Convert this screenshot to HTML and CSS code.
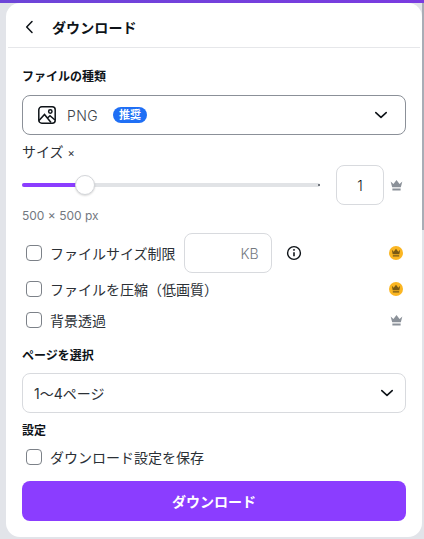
FILE: index.html
```html
<!DOCTYPE html>
<html lang="ja">
<head>
    <meta charset="UTF-8">
    <meta name="viewport" content="width=device-width, initial-scale=1.0">
    <title>ダウンロード</title>
    <link rel="stylesheet" href="styles.css">
</head>
<body>
    <div class="top-band"></div>
    <div class="scrollbar"><div class="scrollbar-thumb"></div></div>
    <div class="panel">
        <header class="panel-head">
            <svg class="back-icon" width="16" height="16" viewBox="0 0 16 16"><path d="M10 2.5 4.7 8l5.3 5.5" fill="none" stroke="#0e1318" stroke-width="1.5" stroke-linecap="round" stroke-linejoin="round"/></svg>
            <h1>ダウンロード</h1>
        </header>

        <div class="panel-body">
            <h2 class="label first">ファイルの種類</h2>
            <div class="select">
                <svg class="file-icon" width="20" height="20" viewBox="0 0 20 20" fill="none" stroke="#0e1318" stroke-width="1.5">
                    <rect x="1.8" y="1.8" width="16.4" height="16.4" rx="3"/>
                    <circle cx="13.3" cy="6.5" r="1.7"/>
                    <path d="M2 15.5 7.5 9.5 14 17.5M10.5 13l2.5-2.3 5 4.3"/>
                </svg>
                <span class="file-name">PNG</span>
                <span class="badge">推奨</span>
                <svg class="chevron" width="14" height="14" viewBox="0 0 14 14"><path d="M1.8 4.6 7 9.4l5.2-4.8" fill="none" stroke="#0e1318" stroke-width="1.6" stroke-linecap="round" stroke-linejoin="round"/></svg>
            </div>

            <div class="size-label">サイズ <span class="size-x">×</span></div>
            <div class="size-row">
                <div class="slider">
                    <div class="slider-fill"></div>
                    <div class="slider-thumb"></div>
                </div>
                <div class="number-box">1</div>
                <svg class="crown" width="13" height="13" viewBox="0 0 12 12"><path d="M.6 2.2 3.2 4.6 6 1l2.8 3.6 2.6-2.4L10 7.6H2zM2.2 8.8h7.6v1.7H2.2z" fill="#8b9199"/></svg>
            </div>
            <div class="size-note">500 × 500 px</div>

            <div class="check-row limit-row">
                <span class="checkbox"></span>
                <span class="check-text">ファイルサイズ制限</span>
                <div class="kb-box">KB</div>
                <svg class="info-icon" width="16" height="16" viewBox="0 0 16 16" fill="none" stroke="#0e1318"><circle cx="8" cy="8" r="6.4" stroke-width="1.4"/><path d="M8 7.2v4" stroke-width="1.6"/><circle cx="8" cy="4.9" r=".6" stroke-width="1"/></svg>
                <span class="crown-gold"><svg width="10" height="10" viewBox="0 0 12 12"><path d="M1 2.2 3.2 4.4 6 1l2.8 3.4L11 2.2 10 7.6H2zM2.2 8.8h7.6v1.5H2.2z" fill="#7a5a14"/></svg></span>
            </div>
            <div class="check-row compress-row">
                <span class="checkbox"></span>
                <span class="check-text">ファイルを圧縮（低画質）</span>
                <span class="crown-gold"><svg width="10" height="10" viewBox="0 0 12 12"><path d="M1 2.2 3.2 4.4 6 1l2.8 3.4L11 2.2 10 7.6H2zM2.2 8.8h7.6v1.5H2.2z" fill="#7a5a14"/></svg></span>
            </div>
            <div class="check-row bg-row">
                <span class="checkbox"></span>
                <span class="check-text">背景透過</span>
                <svg class="crown" width="13" height="13" viewBox="0 0 12 12"><path d="M.6 2.2 3.2 4.6 6 1l2.8 3.6 2.6-2.4L10 7.6H2zM2.2 8.8h7.6v1.7H2.2z" fill="#8b9199"/></svg>
            </div>

            <h2 class="label page-label">ページを選択</h2>
            <div class="select select-light">
                <span class="page-range">1〜4ページ</span>
                <svg class="chevron" width="14" height="14" viewBox="0 0 14 14"><path d="M1.8 4.6 7 9.4l5.2-4.8" fill="none" stroke="#0e1318" stroke-width="1.6" stroke-linecap="round" stroke-linejoin="round"/></svg>
            </div>

            <h2 class="label settings-label">設定</h2>
            <div class="check-row save-row">
                <span class="checkbox"></span>
                <span class="check-text">ダウンロード設定を保存</span>
            </div>

            <button class="download-btn">ダウンロード</button>
        </div>
    </div>
</body>
</html>
```

FILE: styles.css
```css
* {
    box-sizing: border-box;
}
html, body {
    height: 100%;
}
body {
    margin: 0;
    overflow: hidden;
    background-color: #e2e4e9;
    color: #0e1318;
    font-family: Inter, "Noto Sans CJK JP", sans-serif;
    font-size: 14px;
}
.top-band {
    height: 3px;
    background: linear-gradient(90deg, #6d45d8, #7a3be0);
}
.scrollbar {
    position: absolute;
    top: 3px;
    right: 0;
    width: 2px;
    height: 534px;
    background: #e2e4e9;
}
.scrollbar-thumb {
    height: 227px;
    background: #a9adb6;
}
.panel {
    width: 416px;
    height: 534px;
    margin-left: 6px;
    background: white;
    border-radius: 14px;
}
.panel-head {
    display: flex;
    align-items: center;
    height: 45px;
    margin: 0 2px;
    padding-left: 14px;
    border-bottom: 1px solid #e6e7ea;
}
.back-icon {
    margin-top: 3px;
}
.panel-head h1 {
    margin: 3px 0 0 14px;
    font-size: 14px;
    font-weight: 700;
    letter-spacing: 0.1px;
}
.panel-body {
    padding: 0 16px;
}
.label {
    margin: 0;
    font-size: 12px;
    line-height: 18px;
    font-weight: 700;
}
.label.first {
    margin-top: 20px;
}
.select {
    display: flex;
    align-items: center;
    height: 40px;
    margin-top: 9px;
    padding: 0 17px 0 14px;
    border: 1px solid #8b9098;
    border-radius: 8px;
}
.file-icon {
    margin-right: 10px;
}
.file-name {
    color: #3c4249;
    font-weight: 300;
    letter-spacing: 0.4px;
}
.badge {
    margin-left: 15px;
    padding: 0 6px;
    height: 16px;
    line-height: 16px;
    background: #1f6ff5;
    color: white;
    font-size: 11px;
    font-weight: 700;
    border-radius: 8px;
}
.chevron {
    margin-left: auto;
}
.size-label {
    margin-top: 8px;
    font-size: 14px;
    line-height: 18px;
    color: #2b3036;
}
.size-x {
    font-size: 11px;
}
.size-row {
    display: flex;
    align-items: center;
    height: 40px;
    margin-top: 3px;
}
.slider {
    position: relative;
    width: 298px;
    height: 4px;
    background: #e1e3e6;
    border-radius: 2px;
}
.slider::after {
    content: "";
    position: absolute;
    top: 1px;
    right: 0;
    width: 2px;
    height: 2px;
    background: #73787f;
}
.slider-fill {
    width: 63px;
    height: 4px;
    background: #8b3dff;
    border-radius: 2px;
}
.slider-thumb {
    position: absolute;
    top: -8px;
    left: 53px;
    width: 20px;
    height: 20px;
    background: white;
    border: 1px solid #d4d6da;
    border-radius: 50%;
    box-shadow: 0 1px 2px rgba(0, 0, 0, 0.15);
}
.number-box {
    display: flex;
    align-items: center;
    justify-content: center;
    width: 48px;
    height: 40px;
    margin-left: 16px;
    border: 1px solid #d8dade;
    border-radius: 8px;
    font-weight: 300;
}
.crown {
    margin-left: 6px;
    flex-shrink: 0;
}
.size-note {
    margin-top: 3px;
    font-size: 12px;
    line-height: 16px;
    color: #73787f;
}
.check-row {
    display: flex;
    align-items: center;
    padding-left: 4px;
    padding-right: 3px;
}
.check-row .crown,
.crown-gold {
    margin-left: auto;
}
.checkbox {
    width: 16px;
    height: 16px;
    flex-shrink: 0;
    border: 1px solid #7c8188;
    border-radius: 4px;
}
.check-text {
    margin-left: 8px;
    font-size: 14px;
    color: #2b3036;
}
.limit-row {
    height: 40px;
    margin-top: 9px;
}
.compress-row {
    height: 16px;
    margin-top: 8px;
}
.bg-row {
    height: 16px;
    margin-top: 15px;
}
.save-row {
    height: 16px;
    margin-top: 9px;
}
.kb-box {
    display: flex;
    align-items: center;
    justify-content: flex-end;
    width: 88px;
    height: 40px;
    margin-left: 8px;
    padding-right: 12px;
    border: 1px solid #d8dade;
    border-radius: 8px;
    color: #73787f;
    font-weight: 300;
}
.info-icon {
    margin-left: 14px;
}
.crown-gold {
    display: flex;
    align-items: center;
    justify-content: center;
    width: 14px;
    height: 14px;
    background: #fbb622;
    border-radius: 50%;
}
.page-label {
    margin-top: 19px;
}
.select-light {
    margin-top: 8px;
    padding: 0 11px 0 11px;
    border-color: #d8dade;
}
.page-range {
    font-size: 14px;
    color: #2b3036;
}
.settings-label {
    margin-top: 9px;
}
.download-btn {
    display: block;
    width: 100%;
    height: 40px;
    margin-top: 16px;
    border: none;
    border-radius: 8px;
    background: #8b3dff;
    color: white;
    font-family: inherit;
    font-size: 14px;
    font-weight: 700;
}
```
